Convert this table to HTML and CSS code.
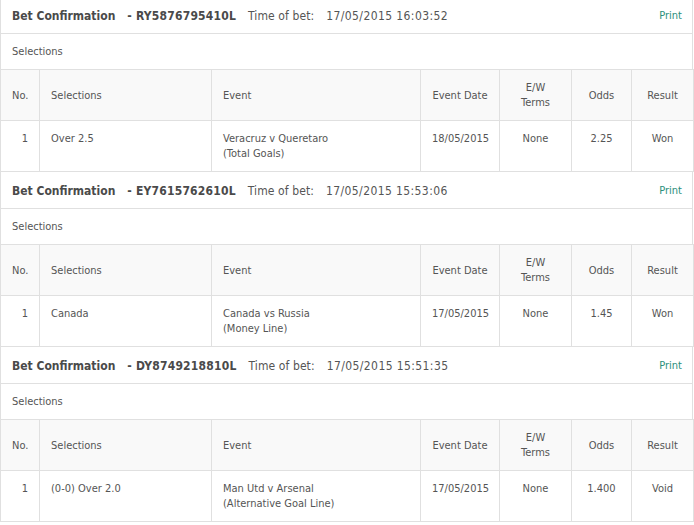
FILE: index.html
```html
<!DOCTYPE html>
<html>
<head>
<meta charset="utf-8">
<link rel="stylesheet" href="styles.css">
</head>
<body>
<div class="bets">
  <section class="bet">
    <div class="bet-head">
      <span class="title">Bet Confirmation</span>
      <span class="ref">- RY5876795410L</span>
      <span class="time-label">Time of bet:</span>
      <span class="time">17/05/2015 16:03:52</span>
      <a class="print" href="#">Print</a>
    </div>
    <div class="bet-label">Selections</div>
    <table class="sel">
      <colgroup><col class="c-no"><col class="c-sel"><col class="c-ev"><col class="c-date"><col class="c-ew"><col class="c-odds"><col class="c-res"></colgroup>
      <thead><tr><th class="num">No.</th><th class="left">Selections</th><th class="left">Event</th><th>Event Date</th><th>E/W<br>Terms</th><th>Odds</th><th>Result</th></tr></thead>
      <tbody><tr><td class="num">1</td><td class="left">Over 2.5</td><td class="left">Veracruz v Queretaro<br>(Total Goals)</td><td>18/05/2015</td><td>None</td><td>2.25</td><td>Won</td></tr></tbody>
    </table>
  </section>
  <section class="bet">
    <div class="bet-head">
      <span class="title">Bet Confirmation</span>
      <span class="ref">- EY7615762610L</span>
      <span class="time-label">Time of bet:</span>
      <span class="time">17/05/2015 15:53:06</span>
      <a class="print" href="#">Print</a>
    </div>
    <div class="bet-label">Selections</div>
    <table class="sel">
      <colgroup><col class="c-no"><col class="c-sel"><col class="c-ev"><col class="c-date"><col class="c-ew"><col class="c-odds"><col class="c-res"></colgroup>
      <thead><tr><th class="num">No.</th><th class="left">Selections</th><th class="left">Event</th><th>Event Date</th><th>E/W<br>Terms</th><th>Odds</th><th>Result</th></tr></thead>
      <tbody><tr><td class="num">1</td><td class="left">Canada</td><td class="left">Canada vs Russia<br>(Money Line)</td><td>17/05/2015</td><td>None</td><td>1.45</td><td>Won</td></tr></tbody>
    </table>
  </section>
  <section class="bet">
    <div class="bet-head">
      <span class="title">Bet Confirmation</span>
      <span class="ref">- DY8749218810L</span>
      <span class="time-label">Time of bet:</span>
      <span class="time">17/05/2015 15:51:35</span>
      <a class="print" href="#">Print</a>
    </div>
    <div class="bet-label">Selections</div>
    <table class="sel">
      <colgroup><col class="c-no"><col class="c-sel"><col class="c-ev"><col class="c-date"><col class="c-ew"><col class="c-odds"><col class="c-res"></colgroup>
      <thead><tr><th class="num">No.</th><th class="left">Selections</th><th class="left">Event</th><th>Event Date</th><th>E/W<br>Terms</th><th>Odds</th><th>Result</th></tr></thead>
      <tbody><tr><td class="num">1</td><td class="left">(0-0) Over 2.0</td><td class="left">Man Utd v Arsenal<br>(Alternative Goal Line)</td><td>17/05/2015</td><td>None</td><td>1.400</td><td>Void</td></tr></tbody>
    </table>
  </section>
</div>
</body>
</html>
```
FILE: styles.css
```css
html, body {
  margin: 0;
  padding: 0;
  background: #fff;
}
body {
  font-family: "DejaVu Sans Condensed", "DejaVu Sans", Verdana, sans-serif;
  font-stretch: condensed;
  font-size: 11px;
  line-height: 15px;
  color: #555;
}
.bets {
  width: 693px;
  margin-top: -3px;
}
.bet-head {
  display: flex;
  align-items: center;
  height: 36px;
  padding: 1px 10px 0 11px;
  box-sizing: border-box;
  height: 37px;
  border-left: 1px solid #e0e0e0;
  border-right: 1px solid #e0e0e0;
  border-bottom: 1px solid #e0e0e0;
  font-size: 12px;
  line-height: 16px;
  color: #555;
}
.title, .ref {
  font-weight: bold;
  color: #4a4a4a;
}
.ref {
  margin-left: 12px;
  letter-spacing: 0.2px;
}
.time-label {
  margin-left: 12px;
  letter-spacing: 0.1px;
}
.time {
  margin-left: 12px;
  letter-spacing: 0.4px;
}
.print {
  margin-left: auto;
  font-size: 11px;
  color: #2b8f7c;
  text-decoration: none;
}
.bet-label {
  padding: 10px 11px;
  border-left: 1px solid #e0e0e0;
  border-right: 1px solid #e0e0e0;
}
.sel {
  width: 693px;
  table-layout: fixed;
  border-collapse: collapse;
}
.c-no { width: 39px; }
.c-sel { width: 172px; }
.c-ev { width: 209px; }
.c-date { width: 79px; }
.c-ew { width: 72px; }
.c-odds { width: 60px; }
.c-res { width: 62px; }
.sel th, .sel td {
  border: 1px solid #e0e0e0;
  padding: 10px 11px;
  text-align: center;
  font-weight: normal;
  line-height: 15px;
}
.sel th {
  background: #f9f9f9;
  vertical-align: middle;
}
.sel td {
  vertical-align: top;
}
.sel .left { text-align: left; }
.sel .num { text-align: right; }
```
